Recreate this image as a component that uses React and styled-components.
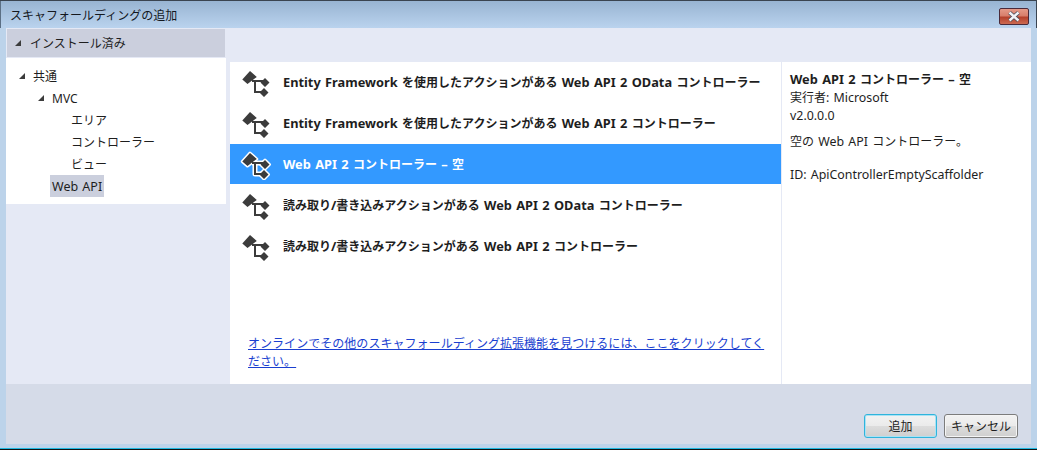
import styled, { createGlobalStyle } from 'styled-components'

const GlobalStyle = createGlobalStyle`
html, body { margin: 0; padding: 0; background: #000; }
body { font-family: "Noto Sans", "Noto Sans CJK JP", sans-serif; font-size: 12px; }
* { box-sizing: border-box; }
`

const templates = [
    'Entity Framework を使用したアクションがある Web API 2 OData コントローラー',
    'Entity Framework を使用したアクションがある Web API 2 コントローラー',
    'Web API 2 コントローラー – 空',
    '読み取り/書き込みアクションがある Web API 2 OData コントローラー',
    '読み取り/書き込みアクションがある Web API 2 コントローラー',
]

const SHAPES = 'M2.3 13.5 L10 5 L16.8 11 L7.5 18 Z M25 12 L29.5 16.5 L25 21 L20.5 16.5 Z M24 22 L28.5 26.5 L24 31 L19.5 26.5 Z'
const LINKS = 'M12 15 H24 M15 15 V26 H23'

// latin runs are set a little larger, the original UI font has wider latin glyphs
function Mixed({ text }) {
    return text.split(/([A-Za-z0-9 .:/–-]+)/).map((part, i) =>
        i % 2 ? <Latin key={i}>{part}</Latin> : part
    )
}

function ScaffoldIcon({ selected }) {
    return (
        <IconSvg width="32" height="32" viewBox="0 0 32 32">
            {selected && (
                <g stroke="#fff" strokeWidth="3" strokeLinejoin="round" fill="#fff">
                    <path d={SHAPES} />
                    <path d={LINKS} fill="none" strokeWidth="5" />
                </g>
            )}
            <path d={LINKS} stroke="#3c3c3c" strokeWidth="2" fill="none" />
            <path d={SHAPES} fill="#3c3c3c" />
        </IconSvg>
    )
}

export default function App() {
    return (
        <Window>
            <GlobalStyle />
            <TitleBar>
                <Title>スキャフォールディングの追加</Title>
                <CloseButton>
                    <svg width="14" height="11" viewBox="0 0 14 11">
                        <path d="M2.5 1.5 L11.5 9.5 M11.5 1.5 L2.5 9.5" stroke="#4a4f5c" strokeWidth="4" />
                        <path d="M2.5 1.5 L11.5 9.5 M11.5 1.5 L2.5 9.5" stroke="#f2f3f6" strokeWidth="2.4" />
                    </svg>
                </CloseButton>
            </TitleBar>
            <Client>
                <Main>
                    <Sidebar>
                        <SideHeader>
                            <Arrow />
                            インストール済み
                        </SideHeader>
                        <Tree>
                            <TreeRow $depth={0}><Arrow />共通</TreeRow>
                            <TreeRow $depth={1}><Arrow />MVC</TreeRow>
                            <TreeRow $depth={2}>エリア</TreeRow>
                            <TreeRow $depth={2}>コントローラー</TreeRow>
                            <TreeRow $depth={2}>ビュー</TreeRow>
                            <TreeRow $depth={1}><TreeSelected>Web API</TreeSelected></TreeRow>
                        </Tree>
                    </Sidebar>
                    <Content>
                        <List>
                            <Items>
                                {templates.map((t, i) => (
                                    <Item key={t} $selected={i === 2}>
                                        <ScaffoldIcon selected={i === 2} />
                                        <span><Mixed text={t} /></span>
                                    </Item>
                                ))}
                            </Items>
                            <OnlineLink href="#">オンラインでその他のスキャフォールディング拡張機能を見つけるには、ここをクリックしてください。</OnlineLink>
                        </List>
                        <Details>
                            <DetailName><Mixed text="Web API 2 コントローラー – 空" /></DetailName>
                            <DetailLine><Mixed text="実行者: Microsoft" /></DetailLine>
                            <DetailLine><Mixed text="v2.0.0.0" /></DetailLine>
                            <DetailDescription><Mixed text="空の Web API コントローラー。" /></DetailDescription>
                            <DetailLine><Mixed text="ID: ApiControllerEmptyScaffolder" /></DetailLine>
                        </Details>
                    </Content>
                </Main>
                <Footer>
                    <Button $primary>追加</Button>
                    <Button>キャンセル</Button>
                </Footer>
            </Client>
            <BottomEdge />
        </Window>
    )
}

const Latin = styled.span`
font-size: 12.4px;
word-spacing: 1px;
`

const Window = styled.div`
width: 1037px;
height: 450px;
display: flex;
flex-direction: column;
overflow: hidden;
color: #1e1e1e;
background: #bcd3ea;
border-top: 1px solid #3a4450;
`

const TitleBar = styled.div`
height: 27px;
flex: none;
display: flex;
align-items: flex-start;
justify-content: space-between;
padding: 0 7px 0 9px;
background: linear-gradient(#98b4d2, #bad3ee);
border-left: 1px solid #5b6f84;
border-right: 1px solid #3a4450;
`

const Title = styled.div`
font-size: 12px;
line-height: 15px;
margin-top: 7px;
color: #14181e;
`

const CloseButton = styled.div`
width: 30px;
height: 17px;
margin-top: 7px;
display: flex;
align-items: center;
justify-content: center;
border: 1px solid #4a2a3a;
border-radius: 2px;
background: linear-gradient(#e59a88 0%, #d87e6b 45%, #b5412c 55%, #cc6a52 100%);
`

const Client = styled.div`
flex: 1;
margin: 0 6px 4px;
display: flex;
flex-direction: column;
min-height: 0;
`

const Main = styled.div`
height: 356px;
flex: none;
display: flex;
background: #e5e9f5;
`

const Sidebar = styled.div`
width: 220px;
flex: none;
display: flex;
flex-direction: column;
`

const SideHeader = styled.div`
height: 28px;
margin: 1px;
display: flex;
align-items: center;
gap: 9px;
padding-left: 8px;
background: #cbcfdd;
`

const Arrow = styled.span`
width: 0;
height: 0;
flex: none;
border-style: solid;
border-width: 0 0 6px 6px;
border-color: transparent transparent #3c3c3c transparent;
`

const Tree = styled.div`
height: 146px;
padding-top: 7px;
background: #fff;
`

const TreeRow = styled.div`
height: 22px;
display: flex;
align-items: center;
gap: 8px;
padding-left: ${p => [13, 32, 65][p.$depth]}px;
`

const TreeSelected = styled.span`
height: 22px;
margin-left: 12px;
padding: 0 2px;
display: flex;
align-items: center;
font-size: 12.5px;
word-spacing: 1px;
background: #cbcfdd;
`

const Content = styled.div`
flex: 1;
display: flex;
margin: 34px 0 0 4px;
background: #fff;
`

const List = styled.div`
width: 552px;
flex: none;
display: flex;
flex-direction: column;
justify-content: space-between;
padding-bottom: 13px;
border-right: 1px solid #e5e9f5;
`

const Items = styled.div`
display: flex;
flex-direction: column;
gap: 1px;
`

const Item = styled.div`
height: 40px;
display: flex;
align-items: center;
gap: 11px;
padding: 0 0 1px 10px;
font-weight: 700;
background: ${p => (p.$selected ? '#3399ff' : 'transparent')};
color: ${p => (p.$selected ? '#fff' : '#1e1e1e')};
${Latin} { font-size: 12.8px; }
`

const IconSvg = styled.svg`
flex: none;
`

const OnlineLink = styled.a`
display: block;
margin: 0 15px 0 18px;
line-height: 18px;
letter-spacing: 0.04px;
color: #1a3fd0;
text-decoration: underline;
`

const Details = styled.div`
flex: 1;
padding: 8px 8px;
`

const DetailName = styled.div`
font-weight: 700;
line-height: 18px;
${Latin} { font-size: 12.8px; }
`

const DetailLine = styled.div`
line-height: 18px;
`

const DetailDescription = styled.div`
line-height: 18px;
margin: 8px 0 15px;
`

const Footer = styled.div`
flex: 1;
display: flex;
justify-content: flex-end;
align-items: flex-end;
gap: 7px;
padding: 0 13px 6px 0;
background: #d5dbe8;
`

const Button = styled.button`
width: ${p => (p.$primary ? 73 : 74)}px;
height: 24px;
padding: 0;
font: inherit;
color: #1e1e1e;
border-radius: 3px;
border: 1px solid ${p => (p.$primary ? '#2fb4dc' : '#7c7c7c')};
box-shadow: inset 0 0 0 1px ${p => (p.$primary ? '#a9e2f4' : '#f5f5f5')};
background: linear-gradient(#f2f2f2 0%, #ebebeb 48%, #dcdcdc 52%, #cfcfcf 100%);
`

const BottomEdge = styled.div`
height: 2px;
flex: none;
background: #1fb8e0;
border-bottom: 1px solid #111;
`
